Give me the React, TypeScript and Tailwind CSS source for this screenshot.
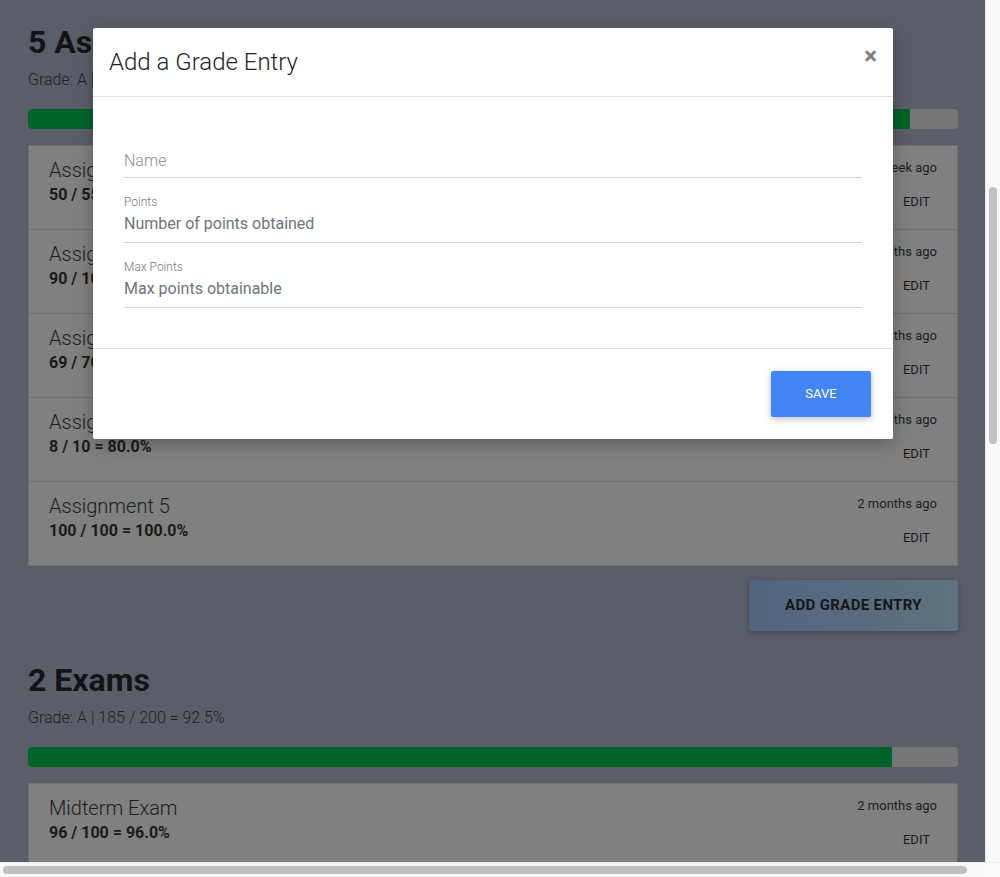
import React from "react";

type Entry = { name: string; score: string; when: string };

const assignments: Entry[] = [
  { name: "Assignment 1", score: "50 / 55 = 90.9%", when: "1 week ago" },
  { name: "Assignment 2", score: "90 / 100 = 90.0%", when: "2 months ago" },
  { name: "Assignment 3", score: "69 / 70 = 98.6%", when: "2 months ago" },
  { name: "Assignment 4", score: "8 / 10 = 80.0%", when: "2 months ago" },
  { name: "Assignment 5", score: "100 / 100 = 100.0%", when: "2 months ago" },
];

const exams: Entry[] = [
  { name: "Midterm Exam", score: "96 / 100 = 96.0%", when: "2 months ago" },
  { name: "Final Exam", score: "89 / 100 = 89.0%", when: "2 months ago" },
];

function Row({ e, first }: { e: Entry; first: boolean }) {
  return (
    <div
      className={
        first
          ? "flex justify-between h-[83px] pl-[20px] pr-[20px]"
          : "flex justify-between h-[84px] pl-[20px] pr-[20px] border-t border-[#707070]"
      }
    >
      <div className="pt-[12px]">
        <div className="text-[20px] leading-[24px] font-light text-[#1c1c1c]">{e.name}</div>
        <div className="mt-[3px] text-[16px] leading-[20px] font-bold text-[#1a1a1a]">{e.score}</div>
      </div>
      <div className="flex flex-col items-end pt-[12px]">
        <div className="text-[13px] leading-[20px] text-[#1e1e1e]">{e.when}</div>
        <div className="mt-[14px] mr-[7px] text-[13px] leading-[20px] text-[#1a1a1a]">EDIT</div>
      </div>
    </div>
  );
}

function Section({
  title,
  grade,
  pct,
  entries,
  button,
  top,
}: {
  title: string;
  grade: string;
  pct: number;
  entries: Entry[];
  button: boolean;
  top: string;
}) {
  return (
    <section className={top}>
      <h2 className="text-[32px] leading-[38px] font-bold text-[#141414]">{title}</h2>
      <div className="mt-[7px] text-[16px] leading-[24px] font-light text-[#1e1e1e]">{grade}</div>
      <div className="mt-[17px] h-[20px] rounded-[4px] bg-[#777777] overflow-hidden flex">
        <div className="h-full bg-[#00632a]" style={{ width: `${pct}%` }} />
      </div>
      <div className="mt-[16px] border border-[#707070] bg-[#808080]">
        {entries.map((e, i) => (
          <Row key={e.name} e={e} first={i === 0} />
        ))}
      </div>
      {button && (
        <div className="flex justify-end mt-[14px]">
          <div className="w-[209px] h-[51px] rounded-[3px] bg-gradient-to-r from-[#536382] to-[#5e737c] shadow-[0_2px_6px_rgba(0,0,0,0.25)] flex items-center justify-center text-[15px] font-bold text-[#161616] tracking-[0.35px]">
            ADD GRADE ENTRY
          </div>
        </div>
      )}
    </section>
  );
}

export default function App() {
  return (
    <div
      className="relative w-[1000px] h-[877px] overflow-hidden flex flex-col"
      style={{ fontFamily: "Roboto, 'Noto Sans', sans-serif" }}
    >
      <div className="flex flex-1 min-h-0">
        <main className="flex-1 bg-[#5a5e69] pl-[28px] pr-[27px] overflow-hidden">
          <Section
            title="5 Assignments"
            grade="Grade: A | 317 / 335 = 94.6%"
            pct={94.8}
            entries={assignments}
            button={true}
            top="pt-[23px]"
          />
          <Section
            title="2 Exams"
            grade="Grade: A | 185 / 200 = 92.5%"
            pct={92.9}
            entries={exams}
            button={false}
            top="mt-[30px]"
          />
        </main>
        <div className="w-[15px] bg-[#f8f8f8] border-l border-[#ececec] flex justify-center">
          <div className="mt-[187px] w-[8px] h-[257px] rounded-full bg-[#c1c1c1]" />
        </div>
      </div>
      <div className="h-[15px] flex bg-[#f8f8f8] border-t border-[#ececec]">
        <div className="w-[985px] flex items-center pl-[3px]">
          <div className="w-[964px] h-[8px] rounded-full bg-[#c1c1c1]" />
        </div>
        <div className="flex-1 bg-[#fafafa]" />
      </div>

      {/* modal */}
      <div className="absolute left-[93px] top-[28px] w-[800px] bg-white rounded-[2px] shadow-[0_5px_18px_rgba(0,0,0,0.28)]">
        <div className="flex items-start p-4 border-b border-[#dee2e6]">
          <div className="flex-1 text-[24px] leading-[36px] font-light text-[#212529]">Add a Grade Entry</div>
          <div className="text-[24px] leading-none font-bold text-[#808080]">×</div>
        </div>
        <div className="pt-[51px] pb-[40px] px-[31px]">
          <input
            className="block w-full pt-[1px] pb-[4px] text-[16px] leading-[24px] font-light border-b border-[#ced4da] outline-none placeholder:text-[#8c8c8c] bg-transparent"
            placeholder="Name"
          />
          <div className="mt-[16px]">
            <div className="text-[12px] leading-[16px] font-light text-[#757575]">Points</div>
            <input
              className="block w-full pt-[2px] pb-[6px] text-[16px] leading-[24px] border-b border-[#ced4da] outline-none placeholder:text-[#6c757d] bg-transparent"
              placeholder="Number of points obtained"
            />
          </div>
          <div className="mt-[16px]">
            <div className="text-[12px] leading-[16px] font-light text-[#757575]">Max Points</div>
            <input
              className="block w-full pt-[2px] pb-[6px] text-[16px] leading-[24px] border-b border-[#ced4da] outline-none placeholder:text-[#6c757d] bg-transparent"
              placeholder="Max points obtainable"
            />
          </div>
        </div>
        <div className="flex justify-end p-[22px] border-t border-[#dee2e6]">
          <div className="w-[100px] h-[46px] rounded-[2px] bg-[#4285f4] shadow-[0_2px_5px_rgba(0,0,0,0.16),0_2px_10px_rgba(0,0,0,0.12)] flex items-center justify-center text-[13px] text-white">
            SAVE
          </div>
        </div>
      </div>
    </div>
  );
}
